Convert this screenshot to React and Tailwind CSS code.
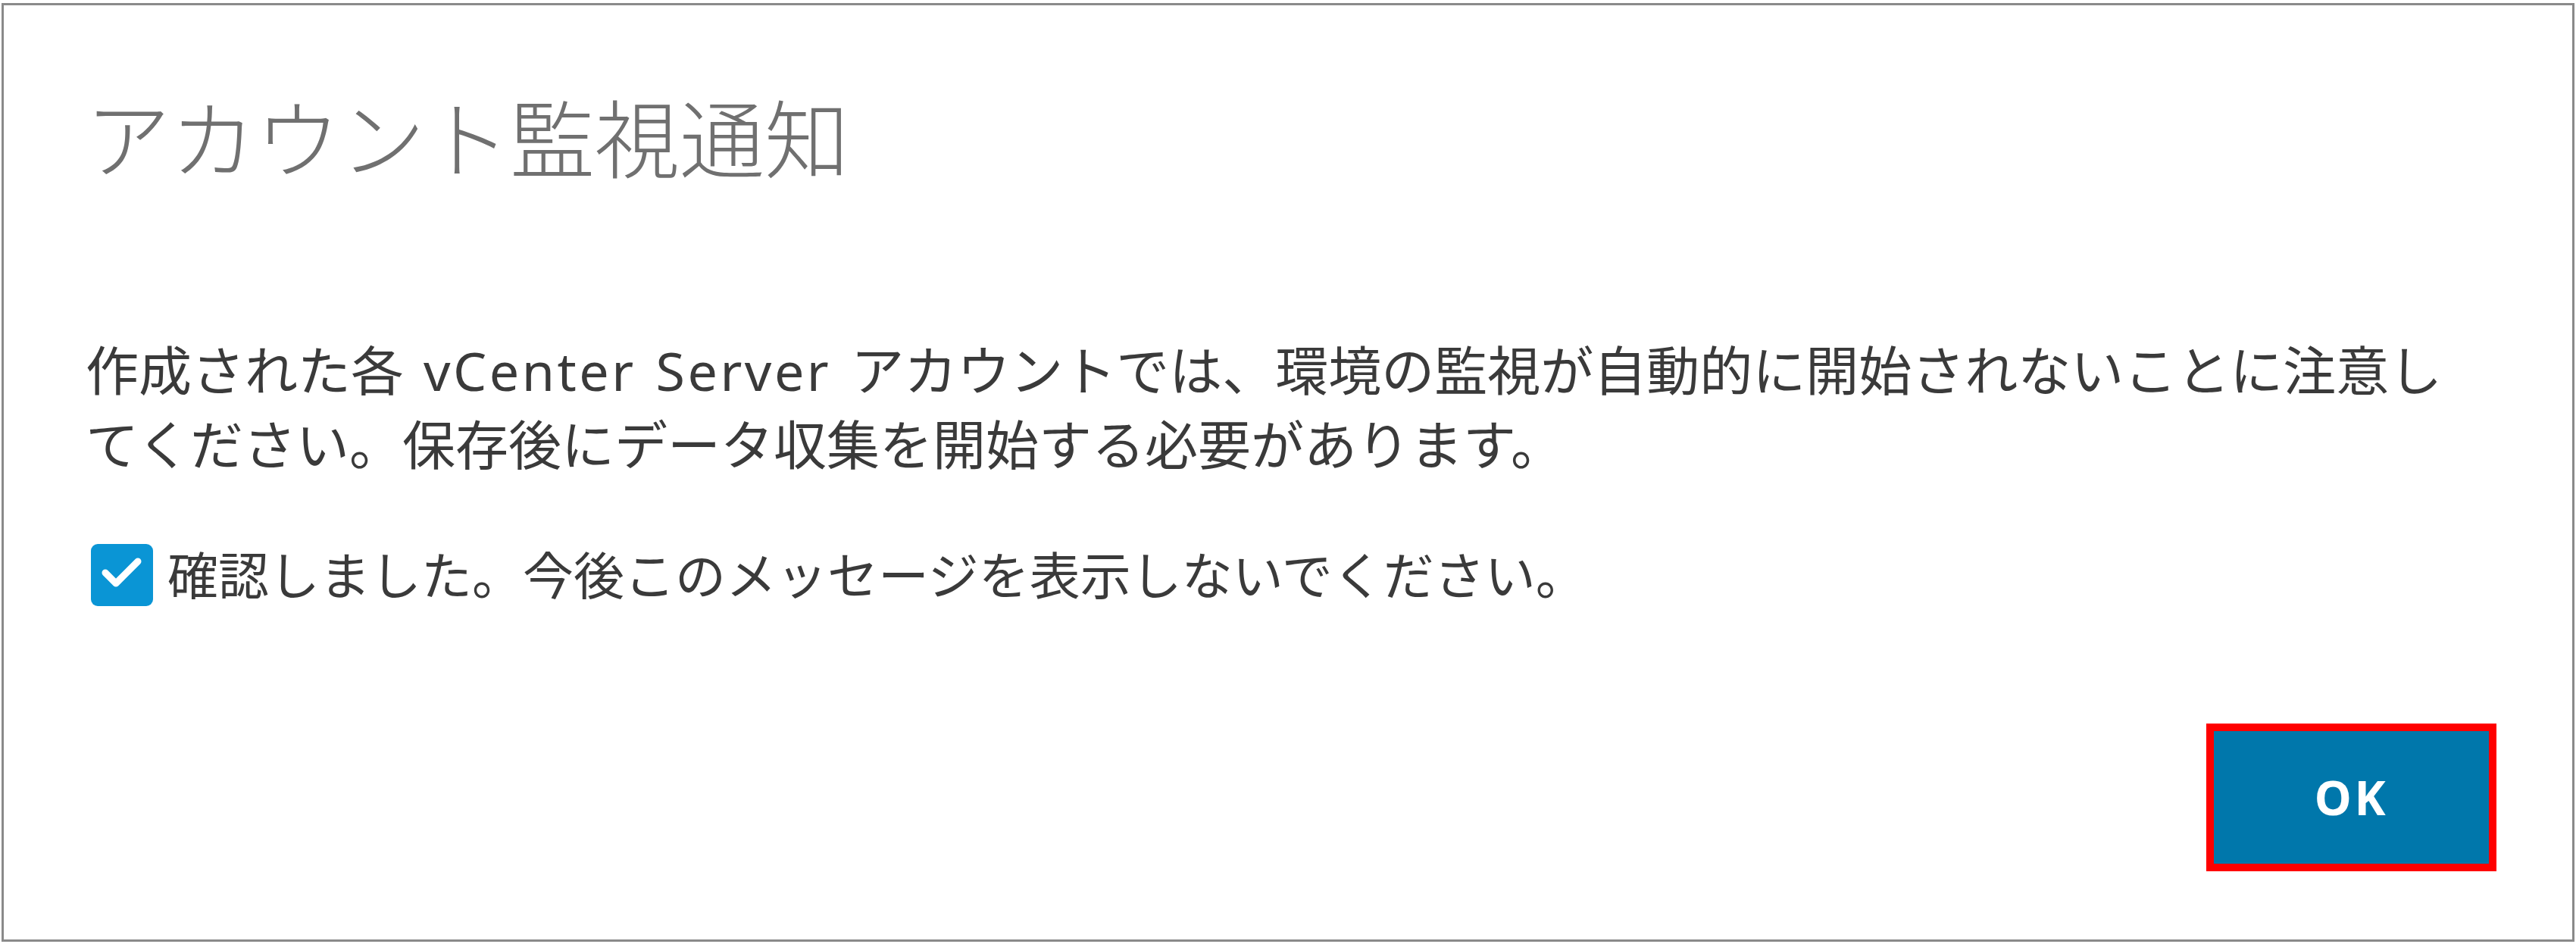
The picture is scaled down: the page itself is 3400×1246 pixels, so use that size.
import React, { useState } from "react";

const font = {
  fontFamily: '"Noto Sans", "Noto Sans CJK JP", sans-serif',
};

const Checkbox = ({ checked, onChange }) => (
  <button
    type="button"
    onClick={() => onChange(!checked)}
    className="w-[82px] h-[82px] shrink-0 rounded-[9px] bg-[#0a95d5] flex items-center justify-center"
    aria-checked={checked}
    role="checkbox"
  >
    {checked && (
      <svg width="82" height="82" viewBox="0 0 82 82">
        <path d="M19 38 L33 52 L62 23" fill="none" stroke="#fff" strokeWidth="9" strokeLinecap="round" strokeLinejoin="round" />
      </svg>
    )}
  </button>
);

export default function App() {
  const [dontShow, setDontShow] = useState(true);
  return (
    <div className="w-[3400px] h-[1246px] bg-white pt-[4px] px-[2px] pb-[3px]" style={font}>
      <div className="h-full border-[3px] border-[#8a8a8a] pl-[108px] pr-[100px] pt-[121px] flex flex-col">
        <h1 className="text-[112px] leading-none font-extralight text-[#707070]">アカウント監視通知</h1>
        <p className="mt-[200px] text-[70px] leading-[98px] text-[#3a3a3a]">
          作成された各<span className="tracking-[0.05em] [word-spacing:0.06em]"> vCenter Server </span>アカウントでは、環境の監視が自動的に開始されないことに注意し
          <br />
          てください。保存後にデータ収集を開始する必要があります。
        </p>
        <label className="mt-[82px] flex items-center gap-[19px] text-[67px] leading-[82px] text-[#3a3a3a] ml-[7px]">
          <Checkbox checked={dontShow} onChange={setDontShow} />
          <span>確認しました。今後このメッセージを表示しないでください。</span>
        </label>
        <div className="mt-[155px] flex justify-end">
          <button className="w-[383px] h-[195px] border-[10px] border-[#ff0000] bg-[#0077ab] text-white text-[62px] font-bold tracking-[0.06em]">
            OK
          </button>
        </div>
      </div>
    </div>
  );
}
